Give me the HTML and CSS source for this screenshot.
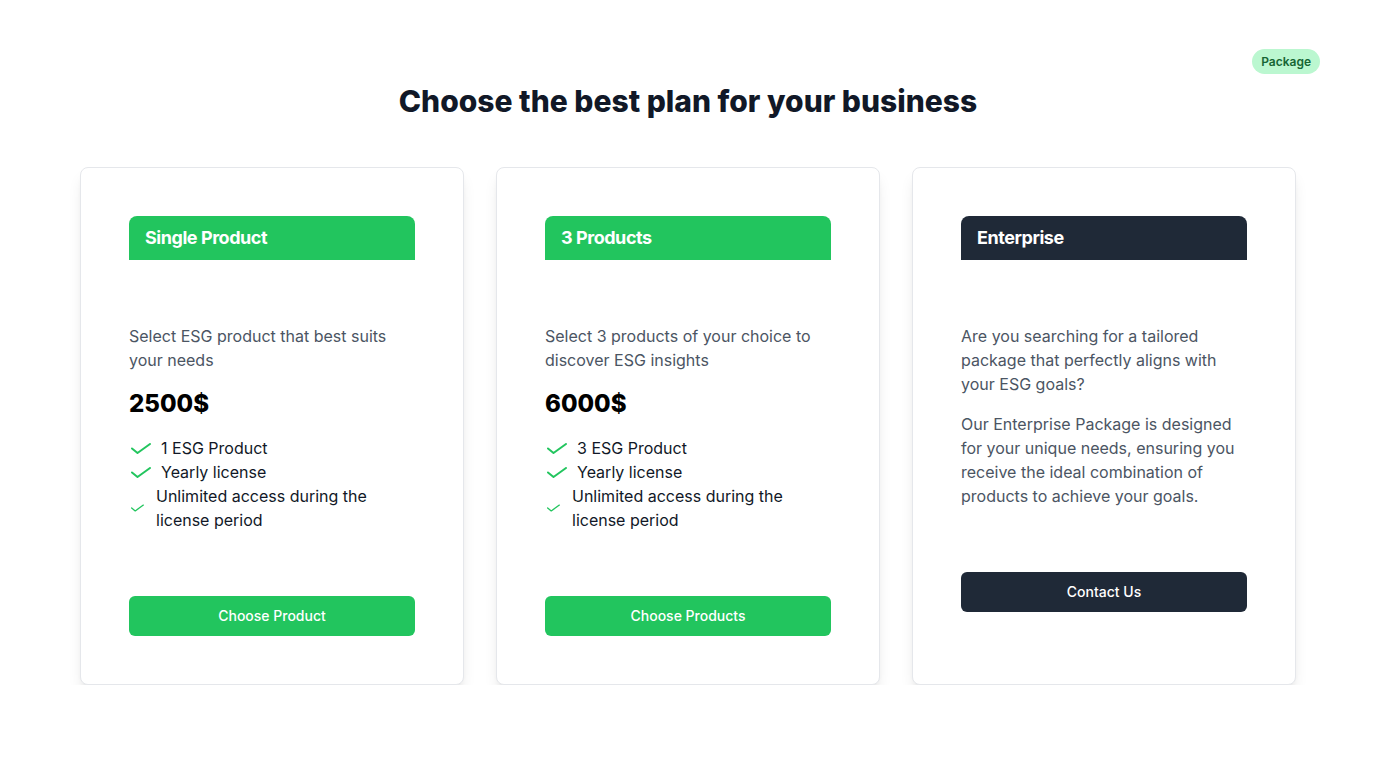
FILE: index.html
```html
<!DOCTYPE html>
<html lang="en">
<head>
<meta charset="utf-8">
<title>Pricing</title>
<link rel="stylesheet" href="styles.css">
</head>
<body>
<main class="page">
  <div class="badge-row"><span class="badge">Package</span></div>
  <h1 class="title">Choose the best plan for your business</h1>
  <div class="cards">
    <section class="card">
      <div class="card-head green">Single Product</div>
      <div class="card-body">
        <p class="desc">Select ESG product that best suits your needs</p>
        <div class="price">2500$</div>
        <ul class="features">
          <li><svg class="check" viewBox="0 0 20 11"><polyline points="1,5.5 6.5,10 19,1"/></svg><span>1 ESG Product</span></li>
          <li><svg class="check" viewBox="0 0 20 11"><polyline points="1,5.5 6.5,10 19,1"/></svg><span>Yearly license</span></li>
          <li><svg class="check small" viewBox="0 0 20 11"><polyline points="1,5.5 6.5,10 19,1"/></svg><span>Unlimited access during the license period</span></li>
        </ul>
      </div>
      <button class="btn green">Choose Product</button>
    </section>
    <section class="card">
      <div class="card-head green">3 Products</div>
      <div class="card-body">
        <p class="desc">Select 3 products of your choice to discover ESG insights</p>
        <div class="price">6000$</div>
        <ul class="features">
          <li><svg class="check" viewBox="0 0 20 11"><polyline points="1,5.5 6.5,10 19,1"/></svg><span>3 ESG Product</span></li>
          <li><svg class="check" viewBox="0 0 20 11"><polyline points="1,5.5 6.5,10 19,1"/></svg><span>Yearly license</span></li>
          <li><svg class="check small" viewBox="0 0 20 11"><polyline points="1,5.5 6.5,10 19,1"/></svg><span>Unlimited access during the license period</span></li>
        </ul>
      </div>
      <button class="btn green">Choose Products</button>
    </section>
    <section class="card">
      <div class="card-head dark">Enterprise</div>
      <div class="card-body">
        <p class="desc">Are you searching for a tailored package that perfectly aligns with your ESG goals?</p>
        <p class="desc second">Our Enterprise Package is designed for your unique needs, ensuring you receive the ideal combination of products to achieve your goals.</p>
      </div>
      <button class="btn dark">Contact Us</button>
    </section>
  </div>
</main>
</body>
</html>
```

FILE: styles.css
```css
* { box-sizing: border-box; }
html, body { margin: 0; padding: 0; background: #ffffff; }
body {
  font-family: Inter, "Liberation Sans", sans-serif;
  color: #111827;
}
.page {
  padding-top: 49px;
}
.badge-row {
  display: flex;
  justify-content: flex-end;
  padding-right: 56px;
}
.badge {
  display: inline-block;
  background: #bbf7d0;
  color: #166534;
  font-size: 12px;
  font-weight: 600;
  line-height: 17px;
  padding: 4px 9px;
  border-radius: 999px;
}
.title {
  margin: 9px 0 0;
  text-align: center;
  font-size: 30px;
  line-height: 36px;
  font-weight: 800;
  color: #111827;
}
.cards {
  width: 1216px;
  margin: 48px auto 0;
  display: grid;
  grid-template-columns: repeat(3, 384px);
  gap: 32px;
  align-items: stretch;
}
.card {
  border: 1px solid #e5e7eb;
  border-radius: 8px;
  background: #fff;
  box-shadow: 0 10px 15px -3px rgba(0,0,0,0.1), 0 4px 6px -4px rgba(0,0,0,0.1);
  padding: 48px;
  display: flex;
  flex-direction: column;
}
.card-head {
  height: 44px;
  padding: 0 16px 2px;
  display: flex;
  align-items: center;
  color: #fff;
  font-size: 18px;
  font-weight: 700;
  letter-spacing: -0.45px;
  border-radius: 8px 8px 0 0;
}
.green { background: #22c55e; }
.dark { background: #1f2937; }
.card-body { margin-top: 64px; }
.desc {
  margin: 0;
  font-size: 16px;
  line-height: 24px;
  color: #4b5563;
}
.desc.second { margin-top: 16px; }
.price {
  margin-top: 16px;
  font-size: 24px;
  line-height: 32px;
  font-weight: 800;
  color: #000;
}
.features {
  list-style: none;
  margin: 16px 0 0;
  padding: 0;
}
.features li {
  display: flex;
  align-items: center;
  font-size: 16px;
  line-height: 24px;
  color: #111827;
}
.check {
  flex: none;
  width: 20px;
  height: 11px;
  margin: 0 10px 0 2px;
  fill: none;
  stroke: #22c55e;
  stroke-width: 2;
  stroke-linecap: round;
  stroke-linejoin: round;
}
.check.small {
  width: 13px;
  height: 8px;
  margin: 0 12px 0 2px;
}
.btn {
  margin-top: 64px;
  height: 40px;
  width: 100%;
  border: none;
  border-radius: 6px;
  padding: 0 0 2px;
  color: #fff;
  font-family: Inter, "Liberation Sans", sans-serif;
  font-size: 14px;
  font-weight: 500;
  cursor: pointer;
}
```
